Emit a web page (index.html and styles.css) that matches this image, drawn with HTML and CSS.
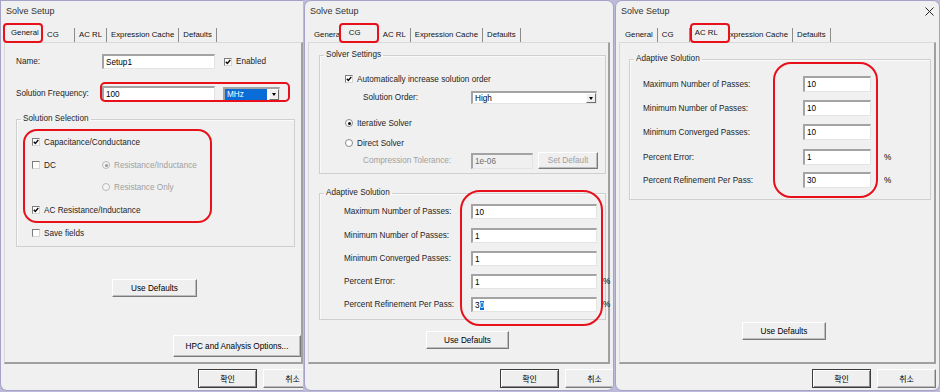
FILE: index.html
```html
<!DOCTYPE html>
<html>
	<head lang="en">
		<meta charset="UTF-8">
		<title>Solve Setup</title>
		<link rel="stylesheet" href="styles.css">
	</head>
	<body>
		<div class="screen">

			<!-- General tab -->
			<section class="dlg dlg-1">
				<div class="dlg-title">Solve Setup</div>
				<div class="tabs">
					<span class="tab on">General</span>
					<span class="tab">CG</span>
					<span class="tab">AC RL</span>
					<span class="tab">Expression Cache</span>
					<span class="tab">Defaults</span>
				</div>
				<div class="page">
					<div class="row row-name">
						<span class="lbl">Name:</span>
						<span class="field">Setup1</span>
						<span class="opt opt-enabled"><span class="cb"><svg viewBox="0 0 6 6"><path d="M0.8 2.7L2.3 4.4L5.3 1"/></svg></span>Enabled</span>
					</div>
					<div class="row row-freq">
						<span class="lbl">Solution Frequency:</span>
						<span class="field">100</span>
						<span class="combo combo-unit"><span class="combo-val hl">MHz</span><span class="combo-btn"></span></span>
					</div>
					<fieldset class="group group-sel">
						<legend>Solution Selection</legend>
						<div class="group-body">
							<div class="opt"><span class="cb"><svg viewBox="0 0 6 6"><path d="M0.8 2.7L2.3 4.4L5.3 1"/></svg></span>Capacitance/Conductance</div>
							<div class="opt-line">
								<div class="opt opt-dc"><span class="cb"></span>DC</div>
								<div class="opt off"><span class="rb dot"></span>Resistance/Inductance</div>
							</div>
							<div class="opt off opt-sub"><span class="rb"></span>Resistance Only</div>
							<div class="opt"><span class="cb"><svg viewBox="0 0 6 6"><path d="M0.8 2.7L2.3 4.4L5.3 1"/></svg></span>AC Resistance/Inductance</div>
							<div class="opt"><span class="cb"></span>Save fields</div>
						</div>
					</fieldset>
					<button class="btn btn-defaults">Use Defaults</button>
					<button class="btn btn-hpc">HPC and Analysis Options...</button>
				</div>
				<div class="dlg-foot">
					<button class="btn btn-dlg btn-ok">확인</button>
					<button class="btn btn-dlg">취소</button>
				</div>
				<span class="mark mark-freq"></span>
				<span class="mark mark-sel"></span>
			</section>

			<!-- CG tab -->
			<section class="dlg dlg-2">
				<div class="dlg-title">Solve Setup</div>
				<div class="tabs">
					<span class="tab">General</span>
					<span class="tab on">CG</span>
					<span class="tab">AC RL</span>
					<span class="tab">Expression Cache</span>
					<span class="tab">Defaults</span>
				</div>
				<div class="page">
					<fieldset class="group group-solver">
						<legend>Solver Settings</legend>
						<div class="group-body">
							<div class="opt opt-auto"><span class="cb"><svg viewBox="0 0 6 6"><path d="M0.8 2.7L2.3 4.4L5.3 1"/></svg></span>Automatically increase solution order</div>
							<div class="row row-order">
								<span class="lbl">Solution Order:</span>
								<span class="combo combo-order"><span class="combo-val">High</span><span class="combo-btn"></span></span>
							</div>
							<div class="opt opt-iter"><span class="rb dot"></span>Iterative Solver</div>
							<div class="opt opt-direct"><span class="rb"></span>Direct Solver</div>
							<div class="row row-tol off">
								<span class="lbl">Compression Tolerance:</span>
								<span class="field field-off">1e-06</span>
								<button class="btn btn-set">Set Default</button>
							</div>
						</div>
					</fieldset>
					<fieldset class="group group-adapt">
						<legend>Adaptive Solution</legend>
						<div class="group-body">
							<div class="row pass"><span class="lbl">Maximum Number of Passes:</span><span class="field">10</span></div>
							<div class="row pass"><span class="lbl">Minimum Number of Passes:</span><span class="field">1</span></div>
							<div class="row pass"><span class="lbl">Minimum Converged Passes:</span><span class="field">1</span></div>
							<div class="row pass"><span class="lbl">Percent Error:</span><span class="field">1</span><span class="unit">%</span></div>
							<div class="row pass"><span class="lbl">Percent Refinement Per Pass:</span><span class="field">3<span class="hl">0</span></span><span class="unit">%</span></div>
						</div>
					</fieldset>
					<button class="btn btn-defaults">Use Defaults</button>
				</div>
				<div class="dlg-foot">
					<button class="btn btn-dlg btn-ok">확인</button>
					<button class="btn btn-dlg">취소</button>
				</div>
				<span class="mark mark-cg"></span>
			</section>

			<!-- AC RL tab -->
			<section class="dlg dlg-3">
				<div class="dlg-title">Solve Setup
					<svg class="close" viewBox="0 0 9 9"><path d="M0.5 0.5L8.5 8.5M8.5 0.5L0.5 8.5"/></svg>
				</div>
				<div class="tabs">
					<span class="tab">General</span>
					<span class="tab">CG</span>
					<span class="tab on">AC RL</span>
					<span class="tab">Expression Cache</span>
					<span class="tab">Defaults</span>
				</div>
				<div class="page">
					<fieldset class="group group-adapt">
						<legend>Adaptive Solution</legend>
						<div class="group-body">
							<div class="row pass"><span class="lbl">Maximum Number of Passes:</span><span class="field">10</span></div>
							<div class="row pass"><span class="lbl">Minimum Number of Passes:</span><span class="field">10</span></div>
							<div class="row pass"><span class="lbl">Minimum Converged Passes:</span><span class="field">10</span></div>
							<div class="row pass"><span class="lbl">Percent Error:</span><span class="field">1</span><span class="unit">%</span></div>
							<div class="row pass"><span class="lbl">Percent Refinement Per Pass:</span><span class="field">30</span><span class="unit">%</span></div>
						</div>
					</fieldset>
					<button class="btn btn-defaults">Use Defaults</button>
				</div>
				<div class="dlg-foot">
					<button class="btn btn-dlg btn-ok">확인</button>
					<button class="btn btn-dlg">취소</button>
				</div>
				<span class="mark mark-acrl"></span>
			</section>

		</div>
	</body>
</html>
```

FILE: styles.css
```css
* {
	margin: 0;
	padding: 0;
	box-sizing: border-box;
}

body {
	width: 940px;
	height: 392px;
	overflow: hidden;
	background: #bcbad8;
	font-family: "Liberation Sans", "Noto Sans CJK KR", sans-serif;
	font-size: 8.2px;
	color: #1e1e1e;
}

.screen {
	display: flex;
	gap: 1px;
	height: 392px;
	align-items: flex-start;
}

/* dialog frame */
.dlg {
	position: relative;
	display: flex;
	flex-direction: column;
	height: 391px;
	background: #f0f0f0;
	border: 1px solid #a4a2c6;
	border-radius: 7px;
	overflow: hidden;
}

.dlg-1 {
	width: 303px;
	border-right: 0;
	border-radius: 0 0 0 7px;
}

.dlg-2 {
	width: 310px;
}

.dlg-3 {
	width: 325px;
}

.dlg-title {
	display: flex;
	align-items: center;
	justify-content: space-between;
	height: 22px;
	padding: 0 5px 2px 5px;
	font-size: 9px;
	font-weight: normal;
	color: #333;
}

.close {
	width: 9px;
	height: 9px;
	fill: none;
	stroke: #222;
	stroke-width: 1;
}

/* tabs */
.tabs {
	display: flex;
	align-items: flex-end;
	height: 19px;
	padding-left: 5px;
	font-size: 7.8px;
	color: #111;
}

.tab {
	height: 14px;
	line-height: 14px;
	min-width: 32px;
	padding: 0 4px;
	border-right: 1px solid #8c8c8c;
	white-space: nowrap;
	overflow: hidden;
}

.tab.on {
	position: relative;
	z-index: 1;
	width: 40px;
	height: 20px;
	line-height: 15px;
	margin: 0 0 -1px -2px;
	border: 2px solid #e8101a;
	border-radius: 4px;
	background: #f0f0f0;
}

.dlg-1 .tab.on {
	margin-left: -3px;
	padding-left: 6px;
}

.dlg-2 .tab.on {
	margin-left: -8px;
	padding-left: 8px;
}

.dlg-3 .tab.on {
	margin-left: 0;
	padding-left: 3px;
}

.dlg-3 .tab.on + .tab {
	margin-left: -9px;
}

/* tab page */
.page {
	flex: 1;
	display: flex;
	flex-direction: column;
	align-items: flex-start;
	margin: 0 3px;
	border: 1px solid #d9d9d9;
	border-right: 2px solid #a0a0a0;
	border-bottom: 2px solid #a0a0a0;
}

.dlg-1 .page {
	margin-right: 0;
	padding-left: 11px;
}

.dlg-2 .page {
	padding-left: 10px;
}

.dlg-3 .page {
	padding-left: 9px;
}

.row {
	display: flex;
	align-items: center;
	height: 15px;
}

.lbl {
	flex: none;
	white-space: nowrap;
}

.off {
	color: #a0a0a0;
}

/* edit fields */
.field {
	display: flex;
	align-items: center;
	flex: none;
	height: 15px;
	padding-left: 2px;
	background: #fff;
	border-style: solid;
	border-width: 2px 1px 1px 2px;
	border-color: #a3a3a3 #e4e4e4 #e4e4e4 #a3a3a3;
	color: #000;
	white-space: nowrap;
}

.field-off {
	background: #f0f0f0;
	color: #6d6d6d;
}

.hl {
	background: #0a6cd6;
	color: #fff;
}

.unit {
	flex: none;
	color: #000;
}

/* drop downs */
.combo {
	display: flex;
	flex: none;
	height: 14px;
	background: #fff;
	border-style: solid;
	border-width: 2px 1px 1px 2px;
	border-color: #a3a3a3 #e4e4e4 #e4e4e4 #a3a3a3;
	color: #000;
}

.combo-val {
	flex: 1;
	display: flex;
	align-items: center;
	padding-left: 2px;
}

.combo-unit .combo-val {
	margin-right: 2px;
}

.combo-btn {
	display: flex;
	align-items: center;
	justify-content: center;
	width: 10px;
	background: #f0f0f0;
	border: 1px solid;
	border-color: #fff #6d6d6d #6d6d6d #fff;
}

.combo-btn::after {
	content: "";
	border-left: 2.5px solid transparent;
	border-right: 2.5px solid transparent;
	border-top: 3px solid #000;
}

/* check boxes and radios */
.opt {
	display: flex;
	align-items: center;
	gap: 4px;
	height: 12px;
	white-space: nowrap;
}

.cb {
	display: flex;
	align-items: center;
	justify-content: center;
	flex: none;
	width: 8px;
	height: 8px;
	background: #fff;
	border: 1px solid;
	border-color: #7c7c7c #d6d6d6 #d6d6d6 #7c7c7c;
}

.cb svg {
	width: 6px;
	height: 6px;
	fill: none;
	stroke: #000;
	stroke-width: 1.3;
}

.rb {
	display: flex;
	align-items: center;
	justify-content: center;
	flex: none;
	width: 8px;
	height: 8px;
	border-radius: 50%;
	background: #fff;
	border: 1px solid #8a8a8a;
}

.off .rb {
	border-color: #b8b8b8;
	background: #f4f4f4;
}

.rb.dot::after {
	content: "";
	width: 3px;
	height: 3px;
	border-radius: 50%;
	background: #111;
}

.off .rb.dot::after {
	background: #9a9a9a;
}

/* group boxes */
.group {
	min-width: 0;
	border: 1px solid #cfcfcf;
	box-shadow: inset 1px 1px #fafafa;
}

.group legend {
	margin-left: 4px;
	padding: 0 2px;
	line-height: 10px;
	color: #1e1e1e;
}

/* buttons */
.btn {
	display: flex;
	align-items: center;
	justify-content: center;
	flex: none;
	height: 18px;
	background: #efefef;
	border: 1px solid;
	border-color: #fff #7a7a7a #7a7a7a #fff;
	box-shadow: inset -1px -1px #bdbdbd;
	font-family: inherit;
	font-size: 8.2px;
	color: #000;
	white-space: nowrap;
}

.btn-dlg {
	width: 59px;
	height: 19px;
	font-family: "Noto Sans CJK KR", sans-serif;
	font-size: 8px;
}

.btn-ok {
	border-color: #3c3c3c;
	box-shadow: inset 1px 1px #fff, inset -1px -1px #8a8a8a;
}

.dlg-foot {
	display: flex;
	justify-content: flex-end;
	gap: 6px;
	height: 26px;
	padding: 5px 3px 0 0;
}

.dlg-1 .dlg-foot {
	margin-right: -22px;
}

.dlg-2 .dlg-foot {
	margin-right: -14px;
}

/* General page */
.dlg-1 .row .lbl {
	width: 86px;
}

.dlg-1 .field {
	width: 113px;
}

.row-name {
	margin-top: 11px;
}

.opt-enabled {
	margin-left: 9px;
}

.row-freq {
	margin-top: 17px;
}

.combo-unit {
	width: 57px;
	margin-left: 8px;
}

.group-sel {
	width: 279px;
	margin-top: 13px;
}

.group-sel .group-body {
	padding: 0 0 7px 15px;
}

.group-sel .opt,
.group-sel .opt-line {
	margin-top: 11px;
}

.group-sel .opt-line .opt {
	margin-top: 0;
}

.group-sel .group-body > :first-child {
	margin-top: 12px;
}

.group-sel .opt-sub {
	margin-top: 10px;
	padding-left: 70px;
}

.opt-line {
	display: flex;
	align-items: center;
	height: 12px;
}

.opt-dc {
	width: 70px;
}

.btn-defaults {
	margin-top: 32px;
	margin-left: 96px;
	width: 85px;
}

.btn-hpc {
	margin-top: 38px;
	align-self: flex-end;
	width: 128px;
	height: 22px;
}

/* CG page */
.group-solver,
.dlg-2 .group-adapt {
	width: 287px;
}

.group-solver {
	margin-top: 7px;
}

.group-solver .group-body {
	padding: 0 0 4px 25px;
}

.opt-auto {
	margin-top: 13px;
}

.row-order,
.row-tol {
	padding-left: 18px;
}

.row-order {
	margin-top: 6px;
	height: 13px;
}

.row-order .lbl,
.row-tol .lbl {
	width: 108px;
}

.combo-order {
	width: 126px;
	height: 13px;
}

.opt-iter {
	margin-top: 13px;
}

.opt-direct {
	margin-top: 8px;
}

.row-tol {
	margin-top: 3px;
	height: 17px;
}

.field-off {
	width: 62px;
	height: 16px;
}

.btn-set {
	width: 60px;
	height: 17px;
	margin-left: 5px;
	color: #a0a0a0;
}

.dlg-2 .group-adapt {
	margin-top: 14px;
}

.dlg-2 .group-adapt .group-body {
	padding: 0 0 7px 24px;
}

.dlg-2 .pass {
	margin-top: 8px;
}

.dlg-2 .pass:first-child {
	margin-top: 6px;
}

.dlg-2 .pass:nth-child(2) {
	margin-top: 9px;
}

.dlg-2 .pass .lbl {
	width: 127px;
}

.dlg-2 .pass .field {
	width: 126px;
}

.dlg-2 .unit {
	margin-left: 6px;
}

.dlg-2 .btn-defaults {
	margin-top: 11px;
	margin-left: 107px;
	width: 83px;
}

/* AC RL page */
.dlg-3 .group-adapt {
	width: 302px;
	margin-top: 11px;
}

.dlg-3 .group-adapt .group-body {
	padding: 0 0 11px 13px;
}

.dlg-3 .pass {
	height: 16px;
	margin-top: 8px;
}

.dlg-3 .pass:first-child {
	margin-top: 12px;
}

.dlg-3 .pass:nth-child(4) {
	margin-top: 9px;
}

.dlg-3 .pass:nth-child(5) {
	margin-top: 7px;
}

.dlg-3 .pass .lbl {
	width: 160px;
}

.dlg-3 .pass .field {
	width: 68px;
	height: 16px;
}

.dlg-3 .unit {
	margin-left: 13px;
}

.dlg-3 .btn-defaults {
	margin-top: 122px;
	margin-left: 113px;
	width: 84px;
}

/* red annotation marks drawn over the dialogs */
.mark {
	position: absolute;
	border: 2px solid #e8101a;
	pointer-events: none;
}

.mark-freq {
	left: 99px;
	top: 81px;
	width: 190px;
	height: 20px;
	border-radius: 5px;
}

.mark-sel {
	left: 22px;
	top: 128px;
	width: 189px;
	height: 94px;
	border-radius: 14px;
}

.mark-cg {
	left: 155px;
	top: 189px;
	width: 143px;
	height: 136px;
	border-radius: 20px;
}

.mark-acrl {
	left: 157px;
	top: 61px;
	width: 105px;
	height: 136px;
	border-radius: 18px;
}
```
